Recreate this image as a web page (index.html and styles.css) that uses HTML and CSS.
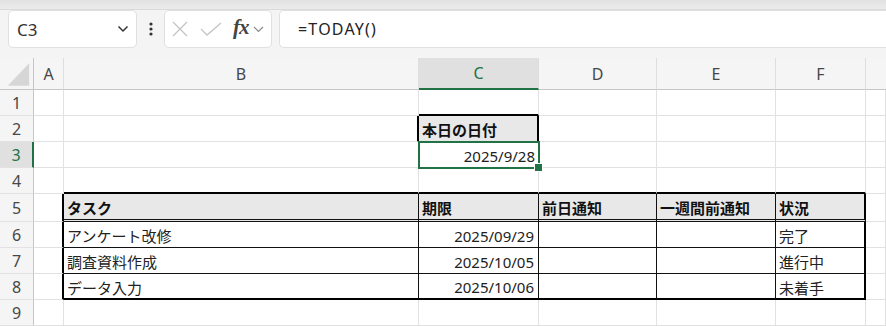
FILE: index.html
```html
<!DOCTYPE html>
<html lang="ja">
<head>
    <meta charset="UTF-8">
    <meta name="viewport" content="width=device-width, initial-scale=1.0">
    <title>Book1 - Excel</title>
    <link rel="stylesheet" href="styles.css">
</head>
<body>
    <div class="top-strip"></div>

    <!-- Formula bar -->
    <div class="formula-bar">
        <div class="name-box">
            <span>C3</span>
            <svg class="chevron" width="12" height="8" viewBox="0 0 12 8"><path d="M1.5 1.5 L6 6 L10.5 1.5" fill="none" stroke="#333" stroke-width="1.5"/></svg>
        </div>
        <div class="more">
            <svg width="6" height="16" viewBox="0 0 6 16"><circle cx="3" cy="3" r="1.6" fill="#333"/><circle cx="3" cy="8" r="1.6" fill="#333"/><circle cx="3" cy="13" r="1.6" fill="#333"/></svg>
        </div>
        <div class="fx-box">
            <svg width="16" height="16" viewBox="0 0 16 16"><path d="M1 1 L15 15 M15 1 L1 15" stroke="#c4c4c4" stroke-width="1.3"/></svg>
            <svg class="check" width="22" height="14" viewBox="0 0 22 14"><path d="M1 7 L7 13 L21 1" fill="none" stroke="#c4c4c4" stroke-width="1.3"/></svg>
            <span class="fx">fx</span>
            <svg width="11" height="7" viewBox="0 0 11 7"><path d="M1 1 L5.5 5.5 L10 1" fill="none" stroke="#8a8a8a" stroke-width="1.2"/></svg>
        </div>
        <div class="formula">=TODAY()</div>
    </div>

    <!-- Sheet -->
    <div class="sheet">
        <div class="col-head corner"><svg width="34" height="32" viewBox="0 0 34 32"><polygon points="30,5 30,28 8,28" fill="#d6d6d6"/></svg></div>
        <div class="col-head">A</div><div class="col-head">B</div><div class="col-head active">C</div><div class="col-head">D</div><div class="col-head">E</div><div class="col-head">F</div><div class="col-head last"></div>

        <div class="row-head">1</div>
        <div class="cell"></div><div class="cell"></div><div class="cell edge-b"></div><div class="cell"></div><div class="cell"></div><div class="cell"></div><div class="cell"></div>

        <div class="row-head">2</div>
        <div class="cell"></div><div class="cell edge-r"></div><div class="cell label">本日の日付</div><div class="cell"></div><div class="cell"></div><div class="cell"></div><div class="cell"></div>

        <div class="row-head active">3</div>
        <div class="cell"></div><div class="cell"></div><div class="cell num selected">2025/9/28</div><div class="cell"></div><div class="cell"></div><div class="cell"></div><div class="cell"></div>

        <div class="row-head">4</div>
        <div class="cell"></div><div class="cell edge-b"></div><div class="cell edge-b"></div><div class="cell edge-b"></div><div class="cell edge-b"></div><div class="cell edge-b"></div><div class="cell"></div>

        <div class="row-head">5</div>
        <div class="cell edge-r"></div>
        <div class="cell tbl th">タスク</div>
        <div class="cell tbl th">期限</div>
        <div class="cell tbl th">前日通知</div>
        <div class="cell tbl th">一週間前通知</div>
        <div class="cell tbl th tbl-end">状況</div>
        <div class="cell"></div>

        <div class="row-head">6</div>
        <div class="cell edge-r"></div>
        <div class="cell tbl">アンケート改修</div>
        <div class="cell tbl num">2025/09/29</div>
        <div class="cell tbl"></div>
        <div class="cell tbl"></div>
        <div class="cell tbl tbl-end">完了</div>
        <div class="cell"></div>

        <div class="row-head">7</div>
        <div class="cell edge-r"></div>
        <div class="cell tbl">調査資料作成</div>
        <div class="cell tbl num">2025/10/05</div>
        <div class="cell tbl"></div>
        <div class="cell tbl"></div>
        <div class="cell tbl tbl-end">進行中</div>
        <div class="cell"></div>

        <div class="row-head">8</div>
        <div class="cell edge-r"></div>
        <div class="cell tbl tbl-last">データ入力</div>
        <div class="cell tbl tbl-last num">2025/10/06</div>
        <div class="cell tbl tbl-last"></div>
        <div class="cell tbl tbl-last"></div>
        <div class="cell tbl tbl-last tbl-end">未着手</div>
        <div class="cell"></div>

        <div class="row-head">9</div>
        <div class="cell"></div><div class="cell"></div><div class="cell"></div><div class="cell"></div><div class="cell"></div><div class="cell"></div><div class="cell"></div>
    </div>
</body>
</html>
```

FILE: styles.css
```css
:root {
    --grid-line: #e1e1e1;
    --head-bg: #f5f5f5;
    --head-line: #c6c6c6;
    --excel-green: #217346;
    --fill-gray: #e8e8e8;
    --ink: #1e1e1e;
}

* {
    box-sizing: border-box;
}

body {
    margin: 0;
    width: 886px;
    height: 326px;
    overflow: hidden;
    font-family: "Noto Sans", "Noto Sans CJK JP", sans-serif;
    background-color: #f4f4f4;
    color: var(--ink);
}

.top-strip {
    height: 10px;
    background: linear-gradient(#e2e2e2, #ebebeb);
    border-bottom: 1px solid #dadada;
}

/* formula bar */
.formula-bar {
    height: 48px;
    display: flex;
    align-items: flex-start;
    padding: 0 0 0 8px;
}

.name-box,
.fx-box,
.formula {
    height: 38px;
    background: #fff;
    border: 1px solid #e0e0e0;
    border-radius: 5px;
    display: flex;
    align-items: center;
}

.name-box {
    width: 129px;
    padding: 0 7px 0 8px;
    justify-content: space-between;
    font-size: 17px;
    color: #333;
}

.more {
    width: 27px;
    height: 38px;
    display: flex;
    align-items: center;
    justify-content: center;
}

.fx-box {
    width: 108px;
    padding: 0 0 0 7px;
}

.fx-box .check {
    margin-left: 12px;
}

.fx {
    font-family: "Liberation Serif", serif;
    font-style: italic;
    font-weight: bold;
    font-size: 21px;
    color: #444;
    margin: -3px 4px 0 11px;
    letter-spacing: -1px;
}

.formula {
    flex: 1;
    margin-left: 7px;
    border-right: none;
    border-radius: 5px 0 0 5px;
    padding-left: 18px;
    font-size: 16px;
    letter-spacing: 1.2px;
    color: #222;
}

/* sheet grid */
.sheet {
    display: grid;
    grid-template-columns: 34px 30px 355px 120px 118px 119px 90px 20px;
    grid-template-rows: 32px repeat(4, 26px) 28px repeat(4, 26px);
}

.col-head,
.row-head {
    background: var(--head-bg);
    display: flex;
    align-items: center;
    justify-content: center;
    font-size: 16px;
    color: #474747;
}

.col-head {
    border-right: 1px solid #dedede;
    border-bottom: 1px solid var(--head-line);
}

.col-head.corner {
    border-right-color: var(--head-line);
}

.col-head.last {
    border-right: none;
}

.col-head.active {
    background: #e0e0e0;
    color: var(--excel-green);
    border-bottom: 2px solid var(--excel-green);
}

.row-head {
    border-right: 1px solid var(--head-line);
    border-bottom: 1px solid #e2e2e2;
}

.row-head.active {
    background: #e0e0e0;
    color: var(--excel-green);
    border-right: 2px solid var(--excel-green);
}

.cell {
    background: #fff;
    border-right: 1px solid var(--grid-line);
    border-bottom: 1px solid var(--grid-line);
    display: flex;
    align-items: center;
    padding: 2px 4px 0 3px;
    font-size: 15px;
    color: #222;
    white-space: nowrap;
}

.cell.num {
    justify-content: flex-end;
}

/* borders drawn on the neighbours of a boxed range */
.cell.edge-b {
    border-bottom: 2px solid #000;
}

.cell.edge-r {
    border-right: 2px solid #000;
}

.cell.label {
    background: var(--fill-gray);
    border-right: 2px solid #000;
    font-weight: bold;
    color: #111;
}

.cell.selected {
    position: relative;
    z-index: 1;
    border: 1px solid var(--excel-green);
    box-shadow: 0 0 0 1px var(--excel-green);
    padding-right: 3px;
}

.cell.selected::after {
    content: "";
    position: absolute;
    right: -5px;
    bottom: -5px;
    width: 7px;
    height: 7px;
    background: var(--excel-green);
    border: 1px solid #fff;
}

/* task table */
.cell.tbl {
    border-right: 1px solid #111;
    border-bottom: 1px solid #111;
}

.cell.th {
    background: var(--fill-gray);
    font-weight: bold;
    color: #111;
    border-bottom: 3px double #111;
}

.cell.tbl-end {
    border-right: 2px solid #000;
}

.cell.tbl-last {
    border-bottom: 2px solid #000;
}
```
